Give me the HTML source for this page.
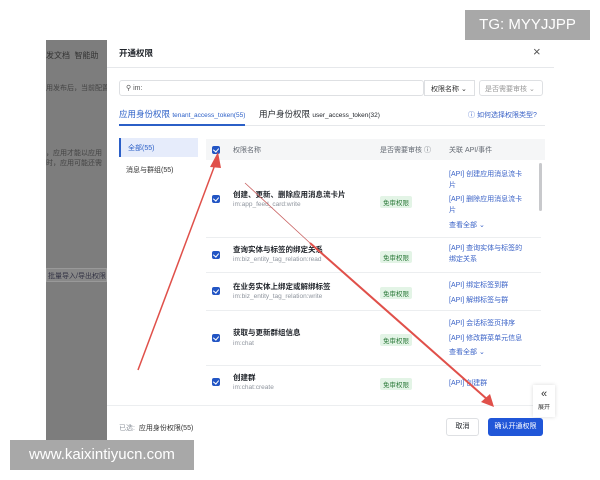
<!DOCTYPE html>
<html><head><meta charset="utf-8"><style>
*{margin:0;padding:0;box-sizing:border-box}
body{width:600px;height:480px;background:#fff;position:relative;overflow:hidden;font-family:"Liberation Sans","Noto Sans CJK SC",sans-serif;color:#1f2329}
.a{position:absolute;white-space:nowrap}
.cb{position:absolute;width:8px;height:8px;background:#2255c4;border-radius:2px}
.cb:after{content:"";position:absolute;left:2px;top:1px;width:3px;height:4px;border:solid #fff;border-width:0 1.2px 1.2px 0;transform:rotate(40deg)}
.tag{position:absolute;background:#e3f4e6;color:#2c7a3a;font-size:6.5px;padding:1px 3px;border-radius:2px}
.nm{font-size:7.5px;font-weight:bold;color:#1f2329}
.code{font-size:6.5px;color:#8f959e}
.lk{font-size:7px;color:#3b63c7}
.sep{position:absolute;left:206px;width:335px;height:1px;background:#eceef0}
</style></head><body>
<div class="a" style="left:46px;top:40px;width:61px;height:400px;background:#7d7d7d"></div>
<div class="a" style="left:46px;top:50px;font-size:8px;color:#333">发文档 &nbsp;智能助</div>
<div class="a" style="left:46px;top:83px;font-size:7px;color:#444">用发布后，当前配置</div>
<div class="a" style="left:46px;top:148px;font-size:7px;color:#444">，应用才能以应用</div>
<div class="a" style="left:46px;top:158px;font-size:7px;color:#444">时，应用可能还需</div>
<div class="a" style="left:46px;top:268px;width:61px;height:14px;background:#888;border:1px solid #999;font-size:7px;color:#334;padding:2px 1px">批量导入/导出权限</div>
<div class="a" style="left:107px;top:40px;width:447px;height:400px;background:#fff"></div>
<div class="a" style="left:119px;top:47px;font-size:8.5px;font-weight:bold">开通权限</div>
<div class="a" style="left:533px;top:44px;font-size:13px;color:#555">×</div>
<div class="a" style="left:107px;top:67px;width:447px;height:1px;background:#e6e8eb"></div>
<div class="a" style="left:119px;top:80px;width:305px;height:16px;border:1px solid #dee0e3;border-radius:3px;font-size:7px;padding:3px 0 0 6px;color:#555">⚲ im:</div>
<div class="a" style="left:424px;top:80px;width:51px;height:16px;border:1px solid #dee0e3;font-size:7px;padding:3px 0 0 6px;color:#333">权限名称 ⌄</div>
<div class="a" style="left:479px;top:80px;width:64px;height:16px;border:1px solid #dee0e3;border-radius:3px;font-size:7px;padding:3px 0 0 5px;color:#999">是否需要审核 ⌄</div>
<div class="a" style="left:119px;top:108px;font-size:8.5px;color:#2b5fc7">应用身份权限 <span style="font-size:6.5px">tenant_access_token(55)</span></div>
<div class="a" style="left:259px;top:108px;font-size:8.5px;color:#1f2329">用户身份权限 <span style="font-size:6.5px">user_access_token(32)</span></div>
<div class="a" style="left:468px;top:110px;font-size:7px;color:#3b63c7">ⓘ 如何选择权限类型?</div>
<div class="a" style="left:119px;top:125px;width:426px;height:1px;background:#e6e8eb"></div>
<div class="a" style="left:119px;top:124px;width:126px;height:2px;background:#2b5fc7"></div>
<div class="a" style="left:119px;top:138px;width:79px;height:19px;background:#e6ecfb;border-left:2px solid #2b5fc7;font-size:7px;color:#2b5fc7;padding:5px 0 0 7px">全部(55)</div>
<div class="a" style="left:126px;top:165px;font-size:7px;color:#333">消息与群组(55)</div>
<div class="a" style="left:206px;top:139px;width:339px;height:21px;background:#f5f6f7"></div>
<div class="cb" style="left:212px;top:146px"></div>
<div class="a" style="left:233px;top:145px;font-size:7px;color:#646a73">权限名称</div>
<div class="a" style="left:380px;top:145px;font-size:7px;color:#646a73">是否需要审核 ⓘ</div>
<div class="a" style="left:449px;top:145px;font-size:7px;color:#646a73">关联 API/事件</div>
<div class="a" style="left:539px;top:163px;width:3px;height:48px;background:#c8c9cc;border-radius:2px"></div>
<!-- row1 -->
<div class="cb" style="left:212px;top:195px"></div>
<div class="a nm" style="left:233px;top:189px">创建、更新、删除应用消息流卡片</div>
<div class="a code" style="left:233px;top:201px">im:app_feed_card:write</div>
<div class="tag" style="left:380px;top:196px">免审权限</div>
<div class="a lk" style="left:449px;top:169px;line-height:11px">[API] 创建应用消息流卡<br>片</div>
<div class="a lk" style="left:449px;top:194px;line-height:11px">[API] 删除应用消息流卡<br>片</div>
<div class="a lk" style="left:449px;top:220px">查看全部 ⌄</div>
<div class="sep" style="top:237px"></div>
<div class="cb" style="left:212px;top:251px"></div>
<div class="a nm" style="left:233px;top:244px">查询实体与标签的绑定关系</div>
<div class="a code" style="left:233px;top:256px">im:biz_entity_tag_relation:read</div>
<div class="tag" style="left:380px;top:251px">免审权限</div>
<div class="a lk" style="left:449px;top:243px;line-height:11px">[API] 查询实体与标签的<br>绑定关系</div>
<div class="sep" style="top:272px"></div>
<div class="cb" style="left:212px;top:287px"></div>
<div class="a nm" style="left:233px;top:281px">在业务实体上绑定或解绑标签</div>
<div class="a code" style="left:233px;top:293px">im:biz_entity_tag_relation:write</div>
<div class="tag" style="left:380px;top:287px">免审权限</div>
<div class="a lk" style="left:449px;top:280px">[API] 绑定标签到群</div>
<div class="a lk" style="left:449px;top:295px">[API] 解绑标签与群</div>
<div class="sep" style="top:310px"></div>
<div class="cb" style="left:212px;top:334px"></div>
<div class="a nm" style="left:233px;top:327px">获取与更新群组信息</div>
<div class="a code" style="left:233px;top:340px">im:chat</div>
<div class="tag" style="left:380px;top:334px">免审权限</div>
<div class="a lk" style="left:449px;top:318px">[API] 会话标签页排序</div>
<div class="a lk" style="left:449px;top:333px">[API] 修改群菜单元信息</div>
<div class="a lk" style="left:449px;top:347px">查看全部 ⌄</div>
<div class="sep" style="top:365px"></div>
<div class="cb" style="left:212px;top:378px"></div>
<div class="a nm" style="left:233px;top:372px">创建群</div>
<div class="a code" style="left:233px;top:384px">im:chat:create</div>
<div class="tag" style="left:380px;top:378px">免审权限</div>
<div class="a lk" style="left:449px;top:378px">[API] 创建群</div>
<div class="a" style="left:107px;top:405px;width:447px;height:1px;background:#eceef0"></div>
<div class="a" style="left:533px;top:385px;width:22px;height:32px;background:#fff;box-shadow:0 0 4px rgba(0,0,0,.15);font-size:11px;text-align:center;color:#333;line-height:12px;padding-top:3px">«<br><span style="font-size:6px">展开</span></div>
<div class="a" style="left:119px;top:423px;font-size:7px;color:#8f959e">已选: &nbsp;<span style="color:#333">应用身份权限(55)</span></div>
<div class="a" style="left:446px;top:418px;width:33px;height:18px;border:1px solid #dee0e3;border-radius:3px;font-size:7px;text-align:center;line-height:16px">取消</div>
<div class="a" style="left:488px;top:418px;width:55px;height:18px;background:#2056d8;border-radius:3px;font-size:7px;color:#fff;text-align:center;line-height:18px">确认开通权限</div>
<svg class="a" style="left:0;top:0" width="600" height="480">
<line x1="138" y1="370" x2="216" y2="162" stroke="#e0504a" stroke-width="1.5"/>
<polygon points="218,152 210,167 221,168" fill="#e0504a"/>
<line x1="245" y1="183" x2="310" y2="243" stroke="#c86060" stroke-width="0.8"/>
<line x1="310" y1="243" x2="488" y2="400" stroke="#e0504a" stroke-width="2"/>
<polygon points="494,407 481,402 490,394" fill="#e0504a"/>
</svg>
<div class="a" style="left:465px;top:10px;width:125px;height:30px;background:#a8a8a8;color:#fff;font-size:15px;text-align:center;line-height:30px">TG: MYYJJPP</div>
<div class="a" style="left:10px;top:440px;width:184px;height:30px;background:#a8a8a8;color:#fff;font-size:15px;text-align:center;line-height:30px">www.kaixintiyucn.com</div>
</body></html>
